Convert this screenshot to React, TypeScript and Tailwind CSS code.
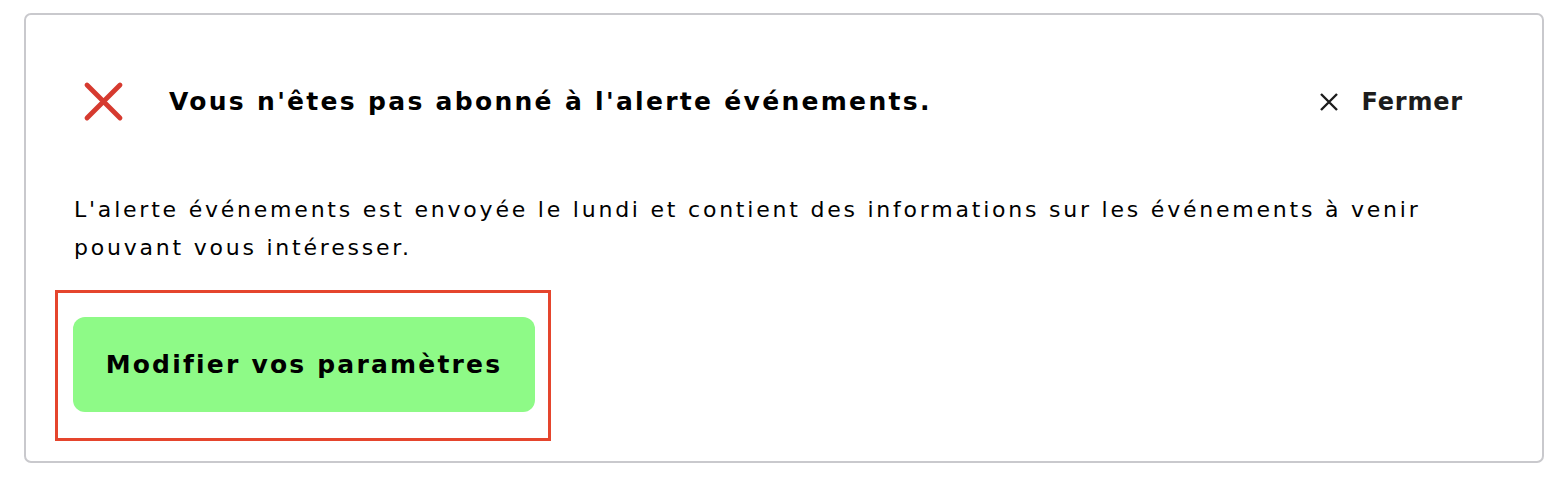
import React from "react";

export default function App() {
  return (
    <div
      className="w-[1568px] h-[486px] bg-white px-[24px] pt-[13px]"
      style={{ fontFamily: "'DejaVu Sans', sans-serif" }}
    >
      <div className="h-[450px] w-[1520px] rounded-[7px] border-2 border-[#c9c9cd] pl-[48px] pr-[80px]">
        <div className="flex h-[176px] items-center pb-[2px] ">
          <div className="flex flex-1 items-center pb-[1px]">
            <svg
              width="42"
              height="42"
              viewBox="0 0 42 42"
              className="ml-[9px] mt-[1px]"
            >
              <path
                d="M4 4 L37 37 M37 4 L4 37"
                stroke="#d63a2f"
                strokeWidth="4.8"
                strokeLinecap="round"
              />
            </svg>
            <h2 className="ml-[44px] text-[25px] font-bold tracking-[2.3px] text-black">
              Vous n'êtes pas abonné à l'alerte événements.
            </h2>
          </div>
          <button className="flex items-center text-[#1c1c1c]">
            <svg width="20" height="20" viewBox="0 0 20 20">
              <path
                d="M2 2 L18 18 M18 2 L2 18"
                stroke="#1c1c1c"
                strokeWidth="2.4"
              />
            </svg>
            <span className="ml-[23px] mr-[-1px] text-[24px] font-bold tracking-[0.8px]">
              Fermer
            </span>
          </button>
        </div>
        <p className="text-[22px] leading-[38px] tracking-[2.78px] text-black">
          L'alerte événements est envoyée le lundi et contient des informations
          sur les événements à venir
          <br />
          pouvant vous intéresser.
        </p>
        <div className="mt-[23px] ml-[-19px] inline-block border-[3px] border-[#e5452d] pb-[26px] pl-[15px] pr-[13px] pt-[24px]">
          <button className="flex h-[95px] w-[462px] items-center justify-center rounded-[12px] bg-[#8efa87] text-[25px] font-bold tracking-[2.2px] text-black">
            Modifier vos paramètres
          </button>
        </div>
      </div>
    </div>
  );
}
